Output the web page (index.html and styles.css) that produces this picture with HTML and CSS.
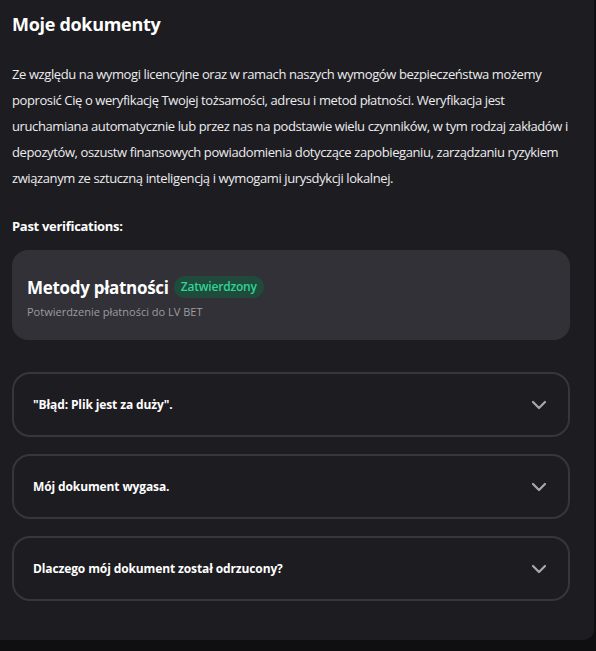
FILE: index.html
```html
<!DOCTYPE html>
<html lang="pl">
<head>
<meta charset="utf-8">
<title>Moje dokumenty</title>
<link rel="stylesheet" href="styles.css">
</head>
<body>
<main class="panel">
  <h1 class="title">Moje dokumenty</h1>
  <p class="intro">Ze względu na wymogi licencyjne oraz w ramach naszych wymogów bezpieczeństwa możemy<br>poprosić Cię o weryfikację Twojej tożsamości, adresu i metod płatności. Weryfikacja jest<br>uruchamiana automatycznie lub przez nas na podstawie wielu czynników, w tym rodzaj zakładów i<br>depozytów, oszustw finansowych powiadomienia dotyczące zapobieganiu, zarządzaniu ryzykiem<br>związanym ze sztuczną inteligencją i wymogami jurysdykcji lokalnej.</p>
  <h2 class="section">Past verifications:</h2>
  <div class="card">
    <div class="card-head">
      <span class="card-title">Metody płatności</span>
      <span class="badge">Zatwierdzony</span>
    </div>
    <div class="card-sub">Potwierdzenie płatności do LV BET</div>
  </div>
  <div class="faq">
    <div class="acc"><span class="acc-text">"Błąd: Plik jest za duży".</span><svg class="chev" viewBox="0 0 16 10" width="16" height="10"><path d="M2 2 L8 8 L14 2" fill="none" stroke="#a9a8ad" stroke-width="2.2" stroke-linecap="round" stroke-linejoin="round"/></svg></div>
    <div class="acc"><span class="acc-text">Mój dokument wygasa.</span><svg class="chev" viewBox="0 0 16 10" width="16" height="10"><path d="M2 2 L8 8 L14 2" fill="none" stroke="#a9a8ad" stroke-width="2.2" stroke-linecap="round" stroke-linejoin="round"/></svg></div>
    <div class="acc"><span class="acc-text">Dlaczego mój dokument został odrzucony?</span><svg class="chev" viewBox="0 0 16 10" width="16" height="10"><path d="M2 2 L8 8 L14 2" fill="none" stroke="#a9a8ad" stroke-width="2.2" stroke-linecap="round" stroke-linejoin="round"/></svg></div>
  </div>
</main>
</body>
</html>
```
FILE: styles.css
```css
* { box-sizing: border-box; }
html, body { margin: 0; padding: 0; }
body {
  background: #0f0f11;
  font-family: "Open Sans", "Noto Sans", sans-serif;
  color: #fff;
  height: 651px;
}
.panel {
  width: 594px;
  background: #1d1c21;
  border-bottom-right-radius: 10px;
  padding: 12px 24px 39px 12px;
}
.title {
  margin: 0;
  font-size: 18px;
  line-height: 24px;
  font-weight: 700;
  letter-spacing: -0.3px;
}
.intro {
  margin: 25px 0 0;
  font-size: 13px;
  line-height: 26px;
  font-weight: 500;
  color: #ececee;
  letter-spacing: -0.4px;
  white-space: nowrap;
}
.section {
  margin: 25px 0 0;
  font-size: 13px;
  line-height: 20px;
  font-weight: 700;
  letter-spacing: -0.3px;
}
.card {
  margin-top: 14px;
  background: #323137;
  border-radius: 16px;
  padding: 25px 15px 20px;
  height: 90px;
}
.card-head {
  display: flex;
  align-items: center;
  gap: 5px;
  height: 24px;
}
.card-title {
  font-size: 17px;
  font-weight: 700;
  letter-spacing: -0.3px;
}
.badge {
  background: #1f4a3c;
  color: #2fd596;
  font-size: 12px;
  font-weight: 600;
  line-height: 22px;
  padding: 0 7px;
  border-radius: 11px;
  letter-spacing: -0.2px;
}
.card-sub {
  margin-top: 5px;
  font-size: 11px;
  line-height: 16px;
  color: #9d9ca2;
  letter-spacing: 0;
}
.faq {
  margin-top: 32px;
  display: flex;
  flex-direction: column;
  gap: 17px;
}
.acc {
  height: 65px;
  border: 2px solid #37363c;
  border-radius: 18px;
  display: flex;
  align-items: center;
  justify-content: space-between;
  padding: 0 21px 0 19px;
}
.acc-text {
  font-size: 12px;
  font-weight: 700;
  letter-spacing: -0.12px;
}
.chev { display: block; }
```
